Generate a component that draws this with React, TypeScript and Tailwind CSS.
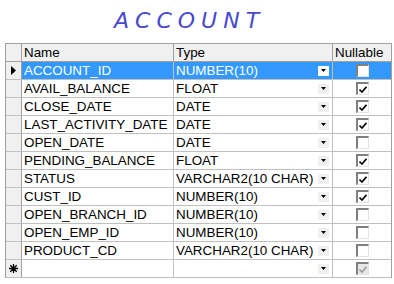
import React from 'react';

type Column = {
    name: string;
    type: string;
    nullable: boolean;
};

const columns: Column[] = [
    { name: 'ACCOUNT_ID', type: 'NUMBER(10)', nullable: false },
    { name: 'AVAIL_BALANCE', type: 'FLOAT', nullable: true },
    { name: 'CLOSE_DATE', type: 'DATE', nullable: true },
    { name: 'LAST_ACTIVITY_DATE', type: 'DATE', nullable: true },
    { name: 'OPEN_DATE', type: 'DATE', nullable: false },
    { name: 'PENDING_BALANCE', type: 'FLOAT', nullable: true },
    { name: 'STATUS', type: 'VARCHAR2(10 CHAR)', nullable: true },
    { name: 'CUST_ID', type: 'NUMBER(10)', nullable: true },
    { name: 'OPEN_BRANCH_ID', type: 'NUMBER(10)', nullable: false },
    { name: 'OPEN_EMP_ID', type: 'NUMBER(10)', nullable: false },
    { name: 'PRODUCT_CD', type: 'VARCHAR2(10 CHAR)', nullable: false },
];

const DropArrow: React.FC<{ selected?: boolean }> = ({ selected }) => (
    <div className={`w-[11px] h-[10px] shrink-0 flex items-center justify-center ${selected ? 'bg-white' : 'bg-[#f0f0f0]'}`}>
        <svg width="5" height="3" viewBox="0 0 5 3">
            <path d="M0 0h5L2.5 3z" fill="#000" />
        </svg>
    </div>
);

const CheckBox: React.FC<{ checked: boolean; disabled?: boolean }> = ({ checked, disabled }) => (
    <div
        className={`w-[13px] h-[13px] border-t-2 border-l-2 border-[#808080] border-r border-b border-r-[#e3e3e3] border-b-[#e3e3e3] flex items-center justify-center ${disabled ? 'bg-[#e6e6e6]' : 'bg-white'}`}
    >
        {checked && (
            <svg width="8" height="7" viewBox="0 0 8 7">
                <path d="M0.5 3.5 L3 6 L7.5 0.8" fill="none" stroke={disabled ? '#9a9a9a' : '#000'} strokeWidth="1.6" />
            </svg>
        )}
    </div>
);

const App: React.FC = () => {
    const font = { fontFamily: '"Liberation Sans", Arial, sans-serif' };

    return (
        <div className="w-[394px] h-[284px] bg-white overflow-hidden" style={font}>
            {/* Title */}
            <div className="h-[43px] pl-[114px] pt-[8px]">
                <span
                    className="text-[22px] leading-[26px] italic tracking-[6px] text-[#4848d0]"
                    style={{ fontFamily: '"DejaVu Sans", sans-serif', fontWeight: 300 }}
                >
                    ACCOUNT
                </span>
            </div>

            {/* Grid */}
            <div className="ml-[5px] w-[387px] border-t border-l border-r border-[#a0a0a0] text-[13.4px] leading-[17px] text-black whitespace-nowrap">
                {/* Header */}
                <div className="flex h-[18px] bg-[#f0f0f0] border-b border-[#a0a0a0]">
                    <div className="w-[16px] border-r border-[#a0a0a0]" />
                    <div className="w-[152px] border-r border-[#a0a0a0] pl-[2px]">Name</div>
                    <div className="w-[159px] border-r border-[#a0a0a0] pl-[2px]">Type</div>
                    <div className="w-[58px] pl-[2px]">Nullable</div>
                </div>

                {columns.map((col, i) => {
                    const selected = i === 0;
                    const cell = selected ? 'bg-[#3399ff] text-white' : 'bg-white';
                    return (
                        <div key={col.name} className="flex h-[18px] border-b border-[#c0c0c0]">
                            <div className="w-[16px] bg-[#f0f0f0] border-r border-[#a0a0a0] flex items-center justify-center">
                                {selected && (
                                    <svg width="5" height="9" viewBox="0 0 5 9">
                                        <path d="M0 0L5 4.5L0 9z" fill="#000" />
                                    </svg>
                                )}
                            </div>
                            <div className={`w-[152px] border-r border-[#c0c0c0] pl-[2px] overflow-hidden ${cell}`}>{col.name}</div>
                            <div className={`w-[159px] border-r border-[#c0c0c0] pl-[2px] pr-[3px] flex items-center justify-between ${cell}`}>
                                <span>{col.type}</span>
                                <DropArrow selected={selected} />
                            </div>
                            <div className={`w-[58px] flex items-center justify-center ${cell}`}>
                                <CheckBox checked={col.nullable} />
                            </div>
                        </div>
                    );
                })}

                {/* New row */}
                <div className="flex h-[18px] border-b border-[#c0c0c0]">
                    <div className="w-[16px] bg-[#f0f0f0] border-r border-[#a0a0a0] flex items-center justify-center">
                        <svg width="9" height="9" viewBox="0 0 9 9">
                            <g stroke="#000" strokeWidth="1.3">
                                <path d="M4.5 0v9M0 4.5h9M1.3 1.3l6.4 6.4M7.7 1.3l-6.4 6.4" />
                            </g>
                        </svg>
                    </div>
                    <div className="w-[152px] border-r border-[#c0c0c0]" />
                    <div className="w-[159px] border-r border-[#c0c0c0] pr-[3px] flex items-center justify-end">
                        <DropArrow />
                    </div>
                    <div className="w-[58px] flex items-center justify-center">
                        <CheckBox checked disabled />
                    </div>
                </div>
            </div>
        </div>
    );
};

export default App;
